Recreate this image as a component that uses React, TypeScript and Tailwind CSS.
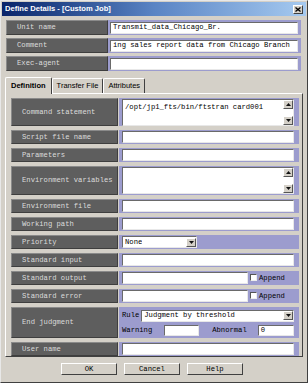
import React from 'react'

const mono = "font-['Liberation_Mono','Courier_New',monospace]"
const sans = "font-['Liberation_Sans',Arial,sans-serif]"

function Field({ className = '' }: { className?: string }) {
  return <div className={`bg-white border border-t-[#6a6a6a] border-l-[#6a6a6a] border-b-[#e8e8e8] border-r-[#e8e8e8] ${className}`} />
}

function TextField({ value = '', className = '' }: { value?: string; className?: string }) {
  return (
    <div className={`bg-white border border-t-[#6a6a6a] border-l-[#6a6a6a] border-b-[#e8e8e8] border-r-[#e8e8e8] flex items-center pl-[2px] overflow-hidden whitespace-nowrap text-[7.2px] text-black ${mono} ${className}`}>
      {value}
    </div>
  )
}

function Arrow({ up = false }: { up?: boolean }) {
  return (
    <div className="w-[10px] h-[9px] bg-[#d4d0c8] border border-t-white border-l-white border-b-[#555] border-r-[#555] flex items-center justify-center">
      <svg width="5" height="3" viewBox="0 0 5 3">
        <path d={up ? 'M2.5 0 L5 3 L0 3 Z' : 'M0 0 L5 0 L2.5 3 Z'} fill="#111" />
      </svg>
    </div>
  )
}

function Select({ value, className = '' }: { value: string; className?: string }) {
  return (
    <div className={`bg-white border border-t-[#6a6a6a] border-l-[#6a6a6a] border-b-[#e8e8e8] border-r-[#e8e8e8] flex items-center justify-between pl-[2px] text-[7.2px] text-black ${mono} ${className}`}>
      <span className="whitespace-nowrap overflow-hidden">{value}</span>
      <Arrow />
    </div>
  )
}

function Label({ text, h, w }: { text: string; h: string; w: string }) {
  return (
    <div className={`${w} ${h} bg-[#5e5e5e] border border-t-[#8a8a8a] border-l-[#8a8a8a] border-b-[#3e3e3e] border-r-[#3e3e3e] flex items-center text-[#dcdcdc] text-[7.2px] ${mono}`}>
      <span className="pl-[10px]">{text}</span>
    </div>
  )
}

function Row({ label, h = 'h-[14px]', children }: { label: string; h?: string; children?: React.ReactNode }) {
  return (
    <div className={`flex ${h}`}>
      <Label text={label} h={h} w="w-[107px]" />
      <div className="flex-1 ml-[1px] bg-[#9c9cce] flex items-center pl-[3px] pr-[5px]">{children}</div>
    </div>
  )
}

function Check() {
  return <div className="w-[7px] h-[7px] bg-white border border-t-[#555] border-l-[#555] border-b-[#eee] border-r-[#eee]" />
}

function Button({ text }: { text: string }) {
  return (
    <div className={`w-[56px] h-[12px] bg-[#d4d0c8] border border-t-white border-l-white border-b-[#404040] border-r-[#404040] flex items-center justify-center text-[7.2px] text-black ${mono}`}>
      {text}
    </div>
  )
}

export default function App() {
  return (
    <div className="w-[308px] h-[383px] bg-[#d4d0c8] border border-t-[#e8e8e8] border-l-[#e8e8e8] border-b-[#404040] border-r-[#404040] overflow-hidden flex flex-col">
      {/* title bar */}
      <div className="h-[14px] mx-[1px] mt-[1px] bg-gradient-to-r from-[#0a246a] via-[#5a84c4] to-[#a6caf0] flex items-center justify-between pl-[3px] pr-[3px]">
        <span className={`text-white font-bold text-[7.6px] ${sans}`}>Define Details - [Custom Job]</span>
        <div className="w-[10px] h-[9px] bg-[#d4d0c8] border border-t-white border-l-white border-b-[#404040] border-r-[#404040] flex items-center justify-center">
          <svg width="6" height="5" viewBox="0 0 6 5"><path d="M0.5 0.5 L5.5 4.5 M5.5 0.5 L0.5 4.5" stroke="#000" strokeWidth="1.3" /></svg>
        </div>
      </div>

      {/* header rows */}
      <div className="flex flex-col gap-[3px] mt-[4px] ml-[5px] mr-[6px]">
        {[['Unit name', 'Transmit_data_Chicago_Br.'], ['Comment', 'ing sales report data from Chicago Branch'], ['Exec-agent', '']].map(([l, v]) => (
          <div key={l} className="flex h-[15px]">
            <Label text={l} h="h-[15px]" w="w-[102px]" />
            <div className="flex-1 bg-[#9c9cce] flex items-center pl-[2px] pr-[3px]">
              <TextField value={v} className="h-[12px] flex-1" />
            </div>
          </div>
        ))}
      </div>

      {/* tabs */}
      <div className={`flex items-end mt-[5px] ml-[4px] h-[17px] text-[7.5px] text-black ${sans}`}>
        <div className="h-[17px] px-[5px] bg-[#d4d0c8] border border-b-0 border-t-white border-l-white border-r-[#404040] rounded-t-[2px] flex items-center font-bold relative z-10 -mb-[1px]">Definition</div>
        <div className="h-[15px] px-[4px] bg-[#d4d0c8] border border-b-0 border-t-white border-l-white border-r-[#404040] rounded-t-[2px] flex items-center">Transfer File</div>
        <div className="h-[15px] px-[4px] bg-[#d4d0c8] border border-b-0 border-t-white border-l-white border-r-[#404040] rounded-t-[2px] flex items-center">Attributes</div>
      </div>

      {/* panel */}
      <div className="mx-[4px] h-[264px] border border-t-white border-l-white border-b-[#404040] border-r-[#404040] pt-[4px] pl-[5px] pr-[3px] flex flex-col gap-[4px]">
        <Row label="Command statement" h="h-[28px]">
          <div className="flex-1 h-[27px] bg-white border border-t-[#6a6a6a] border-l-[#6a6a6a] border-b-[#e8e8e8] border-r-[#e8e8e8] flex justify-between">
            <span className={`text-[7.2px] pl-[2px] pt-[2px] text-black ${mono}`}>/opt/jp1_fts/bin/ftstran card001</span>
            <div className="flex flex-col justify-between"><Arrow up /><Arrow /></div>
          </div>
        </Row>
        <Row label="Script file name"><Field className="flex-1 h-[12px]" /></Row>
        <Row label="Parameters"><Field className="flex-1 h-[12px]" /></Row>
        <Row label="Environment variables" h="h-[29px]">
          <div className="flex-1 h-[27px] bg-white border border-t-[#6a6a6a] border-l-[#6a6a6a] border-b-[#e8e8e8] border-r-[#e8e8e8] flex justify-end">
            <div className="flex flex-col justify-between"><Arrow up /><Arrow /></div>
          </div>
        </Row>
        <Row label="Environment file"><Field className="flex-1 h-[12px]" /></Row>
        <Row label="Working path"><Field className="flex-1 h-[12px]" /></Row>
        <Row label="Priority"><Select value="None" className="w-[75px] h-[12px]" /></Row>
        <Row label="Standard input"><Field className="flex-1 h-[12px]" /></Row>
        <Row label="Standard output">
          <Field className="w-[126px] h-[12px]" />
          <div className="ml-[2px] flex items-center gap-[2px]"><Check /><span className={`text-[7.2px] text-black ${mono}`}>Append</span></div>
        </Row>
        <Row label="Standard error">
          <Field className="w-[126px] h-[12px]" />
          <div className="ml-[2px] flex items-center gap-[2px]"><Check /><span className={`text-[7.2px] text-black ${mono}`}>Append</span></div>
        </Row>
        <Row label="End judgment" h="h-[31px]">
          <div className={`flex-1 flex flex-col gap-[3px] text-[7.2px] text-black ${mono}`}>
            <div className="flex items-center gap-[2px]">
              <span>Rule</span>
              <Select value="Judgment by threshold" className="flex-1 h-[12px]" />
            </div>
            <div className="flex items-center">
              <span>Warning</span>
              <Field className="w-[35px] h-[11px] ml-[12px]" />
              <span className="ml-[13px]">Abnormal</span>
              <TextField value="0" className="flex-1 h-[11px] ml-[11px]" />
            </div>
          </div>
        </Row>
        <Row label="User name"><Field className="flex-1 h-[12px]" /></Row>
      </div>

      {/* buttons */}
      <div className="flex justify-center gap-[7px] mt-[6px] pr-[4px]">
        <Button text="OK" />
        <Button text="Cancel" />
        <Button text="Help" />
      </div>
    </div>
  )
}
